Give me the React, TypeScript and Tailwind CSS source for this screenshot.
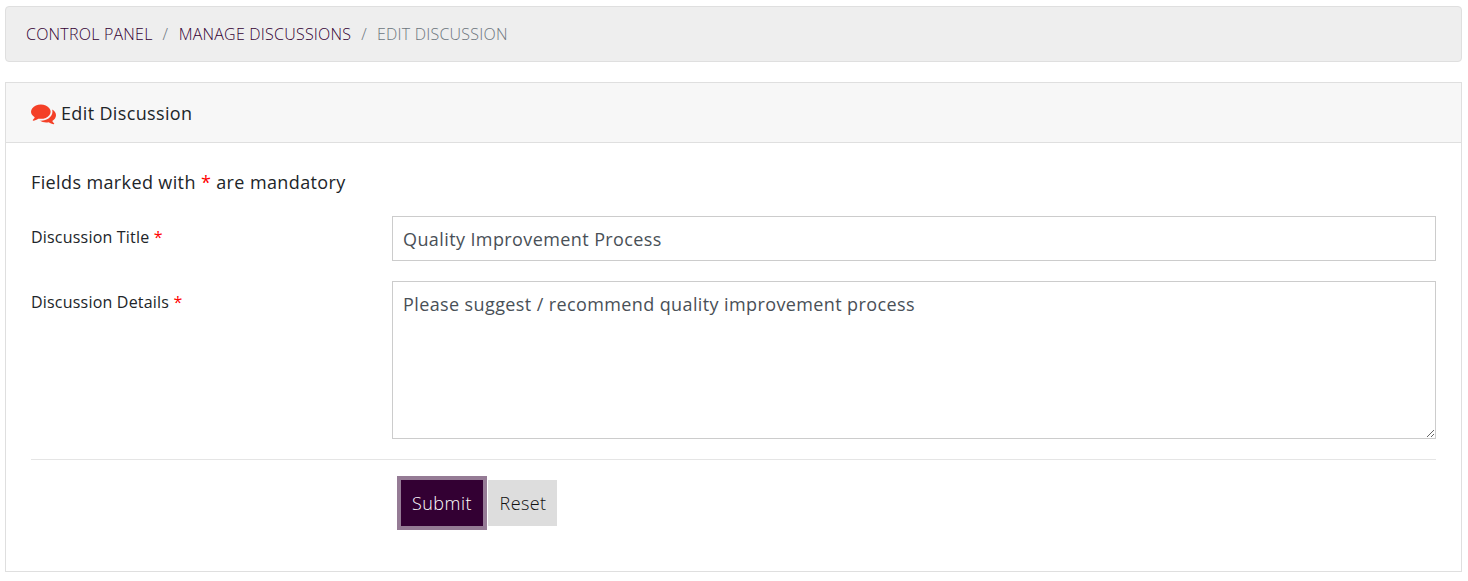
export default function App() {
  return (
    <div className="min-h-[581px] bg-white pt-[6px] pl-[5px] pr-[6px] text-[#212529] font-['Open_Sans',sans-serif]">
      <nav className="flex h-[56px] items-center gap-[10px] rounded-[4px] border border-[#dfdfdf] bg-[#eeeeee] px-[20px] text-[16px] font-light uppercase tracking-[0.22px]">
        <a className="text-[#330033]">Control Panel</a>
        <span className="text-[#6c757d]">/</span>
        <a className="ml-[0.4px] text-[#330033]">Manage Discussions</a>
        <span className="text-[#6c757d]">/</span>
        <span className="text-[#6c757d]">Edit Discussion</span>
      </nav>
      <section className="mt-[20px] h-[490px] border border-[#dfdfdf]">
        <header className="flex h-[60px] items-center gap-[5px] border-b border-[#dfdfdf] bg-[#f7f7f7] pl-[25px] pr-[25px] pt-px text-[18px] tracking-[0.36px]">
          <svg viewBox="0 0 1792 1792" className="h-[25px] w-[25px] fill-[#f44027]" aria-hidden="true">
            <path d="M1408 768q0 139-94 257t-256.5 186.5-353.5 68.5q-86 0-176-16-124 88-278 128-36 9-86 16h-3q-11 0-20.5-8t-11.5-21q-1-3-1-6.5t.5-6.5 2-6l2.5-5 3.5-5.5 4-5 4.5-5 4-4.5q5-6 23-25t26-29.5 22.5-29 25-38.5 20.5-44q-124-72-195-177t-71-224q0-139 94-257t256.5-186.5 353.5-68.5 353.5 68.5 256.5 186.5 94 257zm384 256q0 120-71 224.5t-195 176.5q10 24 20.5 44t25 38.5 22.5 29 26 29.5 23 25q1 1 4 4.5t4.5 5 4 5 3.5 5.5l2.5 5 2 6 .5 6.5-1 6.5q-3 14-13 22t-22 7q-50-7-86-16-154-40-278-128-90 16-176 16-271 0-472-132 58 4 88 4 161 0 309-45t264-129q125-92 192-212t67-254q0-77-23-152 129 71 204 178t75 230z" />
          </svg>
          <h1>Edit Discussion</h1>
        </header>
        <div className="px-[25px] pt-[26px]">
          <p className="text-[18px] leading-[27px] tracking-[0.38px]">
            Fields marked with <span className="text-[#ff0000]">*</span> are mandatory
          </p>
          <div className="mt-[20px] flex">
            <label className="w-[361px] pt-[8px] text-[16px] leading-[27px] tracking-[0.2px]">
              Discussion Title <span className="text-[#ff0000]">*</span>
            </label>
            <input
              readOnly
              value="Quality Improvement Process"
              className="h-[45px] flex-1 border border-[#cccccc] bg-white px-[10px] text-[18px] tracking-[0.4px] text-[#495057] outline-none"
            />
          </div>
          <div className="mt-[20px] flex">
            <label className="w-[361px] pt-[8px] text-[16px] leading-[27px] tracking-[0.2px]">
              Discussion Details <span className="text-[#ff0000]">*</span>
            </label>
            <textarea
              readOnly
              value="Please suggest / recommend quality improvement process"
              className="block h-[158px] flex-1 resize-y border border-[#cccccc] bg-white px-[10px] py-[9px] text-[18px] leading-[27px] tracking-[0.39px] text-[#495057] outline-none"
            />
          </div>
          <hr className="mt-[20px] border-t border-[#e5e5e5]" />
          <div className="mt-[16px] flex items-center pl-[366px]">
            <button className="h-[54px] w-[90px] border-[4px] border-[#957b95] bg-[#330033] text-[18px] font-light tracking-[0.5px] text-white">
              Submit
            </button>
            <button className="ml-px h-[46px] w-[69px] bg-[#dddddd] pl-px text-[18px] font-light tracking-[0.4px] text-[#111111]">
              Reset
            </button>
          </div>
        </div>
      </section>
    </div>
  );
}
